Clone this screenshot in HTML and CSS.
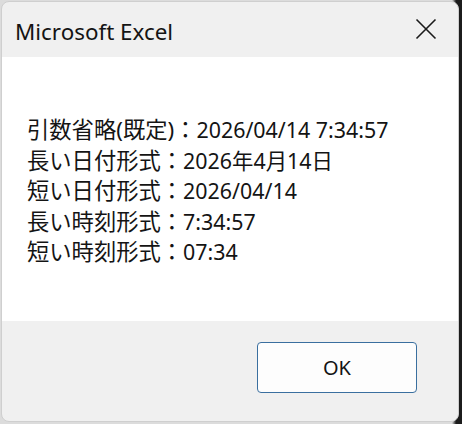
FILE: index.html
```html
<!DOCTYPE html>
<html lang="ja">
<head>
    <meta charset="UTF-8">
    <title>Microsoft Excel</title>
    <link rel="stylesheet" href="styles.css">
</head>
<body>

    <div class="dialog">
        <div class="title-bar">
            <span class="title">Microsoft Excel</span>
            <svg class="close" width="22" height="22" viewBox="0 0 22 22">
                <path d="M1.5 1.5 L20.5 20.5 M20.5 1.5 L1.5 20.5" stroke="#1a1a1a" stroke-width="1.6" fill="none"/>
            </svg>
        </div>

        <div class="message">
            <div><span class="label">引数省略(既定)：</span>2026/04/14 7:34:57</div>
            <div><span class="label">長い日付形式：</span>2026年4月14日</div>
            <div><span class="label">短い日付形式：</span>2026/04/14</div>
            <div><span class="label">長い時刻形式：</span>7:34:57</div>
            <div><span class="label">短い時刻形式：</span>07:34</div>
        </div>

        <div class="footer">
            <button class="ok">OK</button>
        </div>
    </div>

</body>
</html>
```

FILE: styles.css
```css
html, body {
    margin: 0;
    padding: 0;
}

body {
    width: 462px;
    height: 424px;
    background: linear-gradient(90deg, #dcdcdc 0, #dcdcdc 452px, #1c1c1c 456px);
    font-family: 'Noto Sans', 'Noto Sans CJK JP', sans-serif;
    color: #141414;
    overflow: hidden;
}

.dialog {
    box-sizing: border-box;
    width: 458px;
    height: 421px;
    margin: 1px 0 0 1px;
    border: 1px solid #cfcfcf;
    border-radius: 8px;
    background-color: #f0f0f0;
    display: flex;
    flex-direction: column;
    overflow: hidden;
}

.title-bar {
    height: 55px;
    display: flex;
    align-items: center;
    justify-content: space-between;
    padding: 0 21px 0 13px;
}

.title {
    font-size: 22.4px;
    margin-top: 3px;
}

.close {
    margin-top: -1px;
}

.message {
    height: 264px;
    box-sizing: border-box;
    background-color: #fff;
    padding: 58px 0 0 25px;
    font-size: 21.4px;
    line-height: 30.5px;
}

.label {
    font-size: 22.3px;
}

.footer {
    flex: 1;
    display: flex;
    justify-content: flex-end;
    align-items: flex-start;
    padding: 21px 41px 0 0;
}

.ok {
    width: 160px;
    height: 51px;
    background-color: #fdfdfd;
    border: 1px solid #3a6f9f;
    border-radius: 4px;
    font-family: 'Noto Sans', sans-serif;
    font-size: 20px;
    color: #141414;
}
```
